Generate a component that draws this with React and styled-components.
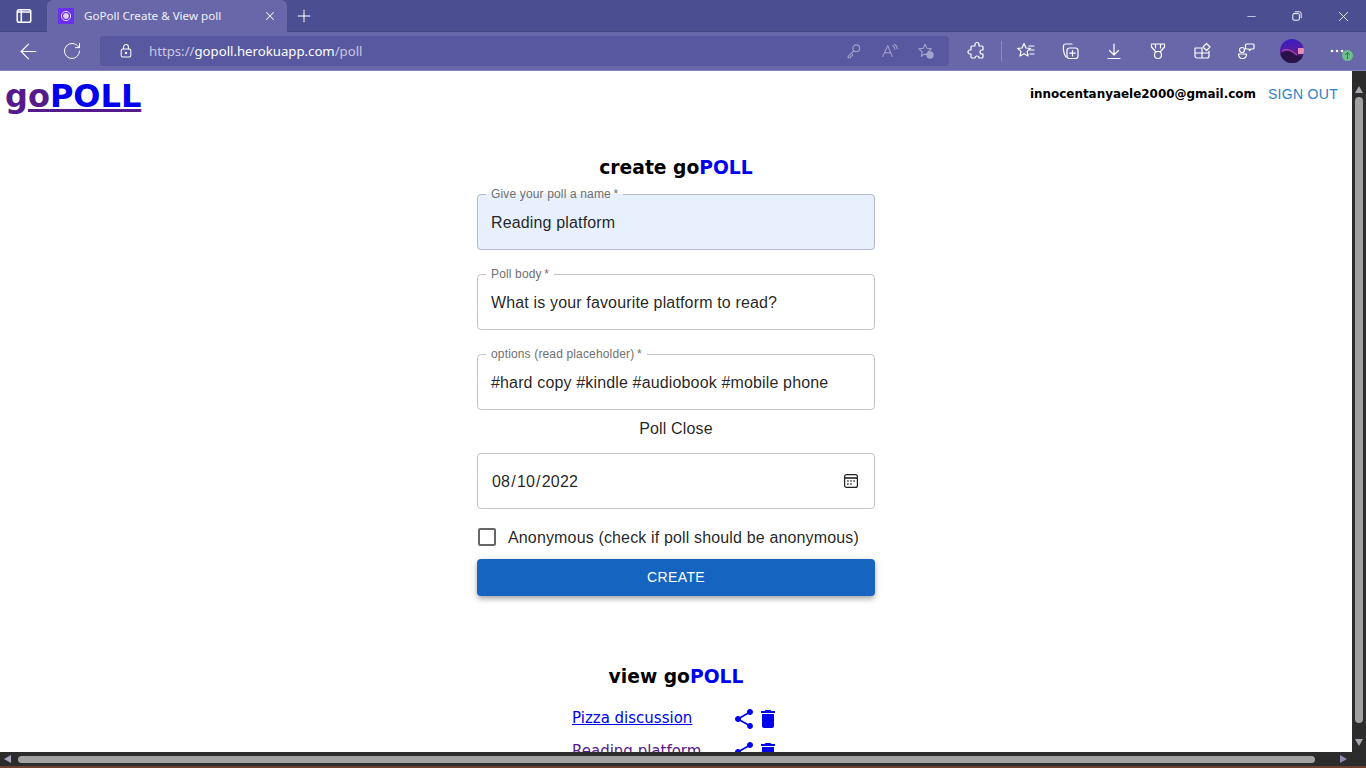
import React from 'react'
import styled, { createGlobalStyle } from 'styled-components'
import { ArrowLeft, RotateCw, Plus, X, Minus } from 'lucide-react'

const GlobalStyle = createGlobalStyle`
  html, body {
    margin: 0;
    height: 100%;
    overflow: hidden;
    background: #fff;
  }
  * { box-sizing: border-box; }
`

const Screen = styled.div`
  width: 1366px;
  height: 768px;
  display: flex;
  flex-direction: column;
  overflow: hidden;
`

const TabBar = styled.div`
  height: 32px;
  flex: none;
  display: flex;
  align-items: flex-end;
  background: #4b4e91;
  box-shadow: inset 0 -1px 0 #434580;
  color: #fff;
`

const SideButton = styled.div`
  width: 47px;
  height: 32px;
  display: flex;
  align-items: center;
  justify-content: center;
`

const Tab = styled.div`
  width: 240px;
  height: 32px;
  padding: 0 10px 0 11px;
  display: flex;
  align-items: center;
  background: #6767a9;
  border-radius: 6px 6px 0 0;
  font: 11.6px "Noto Sans", sans-serif;
  color: #f2f2f8;
`

const Favicon = styled.div`
  width: 16px;
  height: 16px;
  flex: none;
  margin-right: 10px;
  display: flex;
  align-items: center;
  justify-content: center;
  background: #6a2ff0;
`

const TabTitle = styled.span`
  flex: 1;
  padding-bottom: 2px;
  white-space: nowrap;
`

const NewTab = styled.div`
  width: 34px;
  height: 32px;
  display: flex;
  align-items: center;
  justify-content: center;
`

const WindowControls = styled.div`
  margin-left: auto;
  display: flex;
`

const WindowButton = styled.div`
  width: 46px;
  height: 32px;
  display: flex;
  align-items: center;
  justify-content: center;
`

const Toolbar = styled.div`
  height: 39px;
  flex: none;
  display: flex;
  align-items: center;
  padding: 0 6px;
  background: #6767a9;
  border-bottom: 1px solid #8585b8;
  color: #fff;
`

const ToolButton = styled.div`
  width: ${p => p.$w || 44}px;
  height: 30px;
  flex: none;
  display: flex;
  align-items: center;
  justify-content: center;
  opacity: ${p => p.$dim ? 0.45 : 1};
`

const AddressBar = styled.div`
  flex: 1;
  height: 30px;
  margin: 0 6px;
  display: flex;
  align-items: center;
  padding: 0 5px 0 18px;
  border-radius: 4px;
  background: #5858a1;
`

const Url = styled.div`
  flex: 1;
  margin-left: 15px;
  font: 13.2px "Noto Sans", sans-serif;
  color: #c9c9e2;
  white-space: nowrap;
  b {
    font-weight: 400;
    color: #fff;
  }
`

const Separator = styled.div`
  width: 1px;
  height: 20px;
  margin: 0 2px;
  flex: none;
  background: #8a8abd;
`

const MoreBadge = styled.div`
  position: absolute;
  right: 7px;
  bottom: 5px;
  width: 11px;
  height: 11px;
  display: flex;
  align-items: center;
  justify-content: center;
  border-radius: 50%;
  background: #6fbf8d;
`

const MoreButton = styled(ToolButton)`
  position: relative;
`

const Viewport = styled.div`
  flex: 1;
  min-height: 0;
  display: flex;
`

const Page = styled.div`
  flex: 1;
  min-width: 0;
  overflow: hidden;
  background: #fff;
  font-family: "DejaVu Sans", Verdana, sans-serif;
`

const Header = styled.header`
  height: 57px;
  display: flex;
  justify-content: space-between;
  align-items: flex-start;
  padding: 7px 6px 0 5px;
`

const Logo = styled.a`
  font-size: 32px;
  line-height: 37px;
  font-weight: 700;
  color: #551a8b;
  text-decoration: underline;
  cursor: pointer;
`

const Blue = styled.span`
  color: #0000ee;
`

const UserBox = styled.div`
  display: flex;
  align-items: center;
  height: 32px;
`

const Email = styled.span`
  font-size: 11.95px;
  font-weight: 700;
  color: #000;
`

const SignOut = styled.button`
  margin-left: 4px;
  padding: 6px 8px;
  border: 0;
  background: none;
  font: 14px/22px "Liberation Sans", Arial, sans-serif;
  letter-spacing: 0.3px;
  color: #2f7fc4;
  text-transform: uppercase;
`

const Main = styled.main`
  padding-top: 28px;
  display: flex;
  flex-direction: column;
  align-items: center;
`

const Heading = styled.h2`
  margin: 0;
  font-size: 18.72px;
  line-height: 24px;
  font-weight: 700;
  color: #000;
`

const Form = styled.form`
  width: 398px;
  margin-top: 8px;
  display: flex;
  flex-direction: column;
  font-family: "Liberation Sans", Arial, sans-serif;
  letter-spacing: 0.15px;
`

const Field = styled.fieldset`
  margin: 0 0 18px;
  padding: 0 0 0 8px;
  min-width: 0;
  border: 1px solid ${p => p.$filled ? '#b4bacb' : '#c4c4c4'};
  border-radius: 4px;
  background: ${p => p.$filled ? '#e8f0fe' : '#fff'};
`

const FieldLegend = styled.legend`
  padding: 0 5px;
  font-size: 12px;
  line-height: 12px;
  color: #6f6f6f;
  letter-spacing: 0.15px;
  white-space: nowrap;
`

const FieldValue = styled.div`
  margin: 0 0 3px 5px;
  font-size: 16px;
  line-height: 46px;
  color: rgba(0, 0, 0, 0.87);
  white-space: nowrap;
`

const SectionLabel = styled.div`
  margin-top: -18px;
  height: 43px;
  padding-top: 8px;
  font-size: 16px;
  line-height: 22px;
  text-align: center;
  color: rgba(0, 0, 0, 0.87);
`

const DateBox = styled.div`
  height: 56px;
  display: flex;
  align-items: center;
  justify-content: space-between;
  padding: 0 15px 0 14px;
  border: 1px solid #c4c4c4;
  border-radius: 4px;
  font-size: 16px;
  color: rgba(0, 0, 0, 0.87);
`

const DateText = styled.span`
  padding-top: 2px;
`

const DateSlash = styled.span`
  margin: 0 1.1px;
`

const CheckRow = styled.label`
  height: 38px;
  margin-top: 9px;
  padding-left: 1px;
  display: flex;
  align-items: center;
  font-size: 16px;
  color: rgba(0, 0, 0, 0.87);
`

const CheckBox = styled.span`
  width: 18px;
  height: 18px;
  margin-right: 12px;
  flex: none;
  border: 2px solid #666;
  border-radius: 2px;
`

const CheckText = styled.span`
  padding-top: 2px;
`

const CreateButton = styled.button`
  height: 37px;
  margin-top: 3px;
  padding: 0 0 2px;
  border: 0;
  border-radius: 4px;
  background: #1565c0;
  color: #fff;
  font: 14px "Liberation Sans", Arial, sans-serif;
  letter-spacing: 0.4px;
  text-transform: uppercase;
  box-shadow: 0 2px 4px -1px rgba(0,0,0,.2), 0 4px 5px 0 rgba(0,0,0,.14), 0 1px 10px 0 rgba(0,0,0,.12);
`

const ViewSection = styled.section`
  margin-top: 69px;
  display: flex;
  flex-direction: column;
  align-items: center;
`

const PollList = styled.div`
  width: 208px;
  margin-top: 13px;
  display: flex;
  flex-direction: column;
`

const PollRow = styled.div`
  height: 33px;
  display: flex;
  align-items: center;
`

const PollLink = styled.a`
  flex: 1;
  font-size: 15px;
  line-height: 20px;
  margin-top: -2px;
  color: ${p => p.$visited ? '#551a8b' : '#0000ee'};
  text-decoration: underline;
  white-space: nowrap;
`

const VScroll = styled.div`
  width: 14px;
  flex: none;
  display: flex;
  flex-direction: column;
  align-items: center;
  padding: 15px 0 6px;
  background: #2c2c2c;
`

const VThumb = styled.div`
  width: 8px;
  flex: 1;
  margin: 4px 0 16px;
  border-radius: 4px;
  background: #a0a0a0;
`

const HScroll = styled.div`
  height: 14px;
  flex: none;
  display: flex;
  align-items: center;
  padding: 0 19px 0 4px;
  background: #2c2c2c;
`

const HThumb = styled.div`
  height: 7px;
  flex: 1;
  margin: 0 25px 0 7px;
  border-radius: 4px;
  background: #a2a2a2;
`

const Arrow = styled.span`
  width: 0;
  height: 0;
  flex: none;
  border-style: solid;
  border-color: transparent;
  border-width: ${p => p.$dir === 'up' || p.$dir === 'down' ? '0 4px' : '4px 0'};
  ${p => p.$dir === 'up' && 'border-bottom: 7px solid #a6a6b0;'}
  ${p => p.$dir === 'down' && 'border-top: 7px solid #a6a6b0;'}
  ${p => p.$dir === 'left' && 'border-right: 7px solid #a6a6c0;'}
  ${p => p.$dir === 'right' && 'border-left: 7px solid #8b8bb5;'}
`

const BottomStrip = styled.div`
  height: 2px;
  flex: none;
  background: #70402f;
`

const Stroke = ({ size = 20, w = 1.2, children }) => (
  <svg width={size} height={size} viewBox="0 0 20 20" fill="none" stroke="currentColor" strokeWidth={w} strokeLinecap="round" strokeLinejoin="round">
    {children}
  </svg>
)

const polls = [
  { name: 'Pizza discussion' },
  { name: 'Reading platform', visited: true },
]

function ShareIcon() {
  return (
    <svg width="24" height="24" viewBox="0 0 24 24" fill="#0000ee">
      <path d="M18 16.08c-.76 0-1.44.3-1.96.77L8.91 12.7c.05-.23.09-.46.09-.7s-.04-.47-.09-.7l7.05-4.11c.54.5 1.25.81 2.04.81 1.66 0 3-1.34 3-3s-1.34-3-3-3-3 1.34-3 3c0 .24.04.47.09.7L8.04 9.81C7.5 9.31 6.79 9 6 9c-1.66 0-3 1.34-3 3s1.34 3 3 3c.79 0 1.5-.31 2.04-.81l7.12 4.16c-.05.21-.08.43-.08.65 0 1.61 1.31 2.92 2.92 2.92 1.61 0 2.92-1.31 2.92-2.92s-1.31-2.92-2.92-2.92z" />
    </svg>
  )
}

function TrashIcon() {
  return (
    <svg width="24" height="24" viewBox="0 0 24 24" fill="#0000ee">
      <path d="M6 19c0 1.1.9 2 2 2h8c1.1 0 2-.9 2-2V7H6v12zM19 4h-3.5l-1-1h-5l-1 1H5v2h14V4z" />
    </svg>
  )
}

function CalendarIcon() {
  return (
    <svg width="16" height="16" viewBox="0 0 16 16" fill="none" stroke="#222" strokeWidth="1.2">
      <rect x="1.600" y="1.600" width="12.800" height="12.800" rx="2" />
      <path d="M1.600 5h12.800" strokeWidth="1.600" />
      <path d="M4.200 8h1.400M7.300 8h1.400M10.400 8h1.400M4.200 11h1.400M7.300 11h1.400" strokeWidth="1.400" />
    </svg>
  )
}

function Avatar() {
  return (
    <svg width="24" height="24" viewBox="0 0 24 24">
      <defs>
        <linearGradient id="sky" x1="0.3" y1="0" x2="0.5" y2="1">
          <stop offset="0" stopColor="#3a1bc8" />
          <stop offset="0.55" stopColor="#5a1f9a" />
          <stop offset="1" stopColor="#1c0f3c" />
        </linearGradient>
        <clipPath id="disc"><circle cx="12" cy="12" r="12" /></clipPath>
      </defs>
      <circle cx="12" cy="12" r="12" fill="url(#sky)" />
      <g clipPath="url(#disc)">
        <path d="M0 15C6 10 11 12 15 16L24 19V24H0Z" fill="#2a1248" />
        <path d="M2 12C7 9 11 11 17 16" stroke="#b04ba0" strokeWidth="1.200" fill="none" />
        <rect x="18" y="9" width="6" height="6" fill="#e78bb9" />
      </g>
    </svg>
  )
}

function Chrome() {
  return (
    <>
      <TabBar>
        <SideButton>
          <Stroke size={18} w={1.700}>
            <rect x="2.500" y="3" width="15" height="14" rx="2" />
            <path d="M7 4v12M3 5.500h14" />
          </Stroke>
        </SideButton>
        <Tab>
          <Favicon>
            <svg width="12" height="12" viewBox="0 0 12 12" fill="none" stroke="#e5dcff" strokeWidth="1">
              <circle cx="6" cy="6" r="4.600" />
              <circle cx="6" cy="6" r="2.400" fill="#d8ccff" />
            </svg>
          </Favicon>
          <TabTitle>GoPoll Create &amp; View poll</TabTitle>
          <X size={14} strokeWidth={1.800} />
        </Tab>
        <NewTab><Plus size={20} strokeWidth={1.200} /></NewTab>
        <WindowControls>
          <WindowButton><Minus size={13} strokeWidth={1.200} /></WindowButton>
          <WindowButton>
            <Stroke size={12} w={1.600}>
              <rect x="3" y="6" width="11" height="11" rx="2" />
              <path d="M7 3h7a3 3 0 0 1 3 3v7" />
            </Stroke>
          </WindowButton>
          <WindowButton><X size={17} strokeWidth={1.200} /></WindowButton>
        </WindowControls>
      </TabBar>
      <Toolbar>
        <ToolButton><ArrowLeft size={25} strokeWidth={1.100} /></ToolButton>
        <ToolButton><RotateCw size={20} strokeWidth={1.200} /></ToolButton>
        <AddressBar>
          <Stroke size={16} w={1.300}>
            <rect x="4" y="7.500" width="12" height="10" rx="2" />
            <path d="M7 7.500V5a3 3 0 0 1 6 0v2.500" />
            <circle cx="10" cy="12.500" r=".8" fill="currentColor" />
          </Stroke>
          <Url>https://<b>gopoll.herokuapp.com</b>/poll</Url>
          <ToolButton $w={36} $dim>
            <Stroke size={18}>
              <circle cx="12.500" cy="7" r="3.800" />
              <path d="M9.800 9.800 3.500 16v1.500H6l.5-2H8l.5-1.700" />
            </Stroke>
          </ToolButton>
          <ToolButton $w={36} $dim>
            <Stroke size={18}>
              <path d="M2 16 7.500 4 12.500 16M4 12h7" />
              <path d="M13 4c1.500 1 2.500 2.500 2.500 4M15 2.500c2 1.300 3 3 3 5" />
            </Stroke>
          </ToolButton>
          <ToolButton $w={36} $dim>
            <Stroke size={18}>
              <path d="M9 2.500 11 7l5 .5-3.500 3.300L11 14l-3-.5L4.800 16 5.800 11 2 7.600 7 7Z" />
              <circle cx="14.500" cy="14.500" r="3.500" fill="currentColor" />
            </Stroke>
          </ToolButton>
        </AddressBar>
        <ToolButton>
          <Stroke size={20}>
            <path d="M8 3.500a2 2 0 0 1 4 0V5h3a1 1 0 0 1 1 1v3h-1a2 2 0 0 0 0 4h1v3a1 1 0 0 1-1 1h-3a2 2 0 0 0-4 0H5a1 1 0 0 1-1-1v-3H3a2 2 0 0 1 0-4h1V6a1 1 0 0 1 1-1h3Z" />
          </Stroke>
        </ToolButton>
        <Separator />
        <ToolButton>
          <Stroke size={20}>
            <path d="M8 2.500 10 7l4.500.4-3.400 3 1 4.600L8 12.700 4 15l1-4.600L1.600 7.400 6 7ZM13 5h5M14 9h4M14 13h4" />
          </Stroke>
        </ToolButton>
        <ToolButton>
          <Stroke size={20}>
            <path d="M6 16C4 14 3 8 3.500 5a2 2 0 0 1 2-2H12" />
            <rect x="7" y="7" width="11" height="10.500" rx="2.500" />
            <path d="M12.500 9.500v5.500M9.800 12.200h5.400" />
          </Stroke>
        </ToolButton>
        <ToolButton>
          <Stroke size={20}>
            <path d="M10 3v11M5.500 9.500 10 14l4.500-4.500M4 17.500h12" />
          </Stroke>
        </ToolButton>
        <ToolButton>
          <Stroke size={20}>
            <path d="M3.500 3h13v3L12.500 10.500h-5L3.500 6ZM7.500 3v4M12.500 3v4" />
            <circle cx="10" cy="14" r="3.500" />
          </Stroke>
        </ToolButton>
        <ToolButton>
          <Stroke size={20}>
            <path d="M3 7h7v10H5a2 2 0 0 1-2-2ZM3 12h14M10 7v10M10 17h5a2 2 0 0 0 2-2V10" />
            <path d="m14.500 2.500 3.500 3.500-3.500 3.500L11 6Z" />
          </Stroke>
        </ToolButton>
        <ToolButton>
          <Stroke size={20}>
            <circle cx="6" cy="9" r="2.500" />
            <path d="M2.500 13h8c0 3-1.500 4.500-4 4.500S2.500 16 2.500 13Z" />
            <path d="M10.500 3h6.500a1 1 0 0 1 1 1v3a1 1 0 0 1-1 1h-2l-1.500 1.500L13 8h-2.500a1 1 0 0 1-1-1V4a1 1 0 0 1 1-1Z" />
          </Stroke>
        </ToolButton>
        <ToolButton $w={48}><Avatar /></ToolButton>
        <MoreButton>
          <svg width="16" height="4" viewBox="0 0 16 4" fill="#fff">
            <circle cx="2" cy="2" r="1.300" />
            <circle cx="7" cy="2" r="1.300" />
            <circle cx="12" cy="2" r="1.300" />
          </svg>
          <MoreBadge>
            <svg width="9" height="9" viewBox="0 0 9 9" fill="none" stroke="#2f7a52" strokeWidth="1">
              <path d="M4.500 8V1.500M2 4l2.500-2.500L7 4" />
            </svg>
          </MoreBadge>
        </MoreButton>
      </Toolbar>
    </>
  )
}

function App() {
  return (
    <Screen>
      <GlobalStyle />
      <Chrome />
      <Viewport>
        <Page>
          <Header>
            <Logo>go<Blue>POLL</Blue></Logo>
            <UserBox>
              <Email>innocentanyaele2000@gmail.com</Email>
              <SignOut>Sign out</SignOut>
            </UserBox>
          </Header>
          <Main>
            <Heading>create go<Blue>POLL</Blue></Heading>
            <Form>
              <Field $filled>
                <FieldLegend>Give your poll a name{'\u2009'}*</FieldLegend>
                <FieldValue>Reading platform</FieldValue>
              </Field>
              <Field>
                <FieldLegend>Poll body{'\u2009'}*</FieldLegend>
                <FieldValue>What is your favourite platform to read?</FieldValue>
              </Field>
              <Field>
                <FieldLegend>options (read placeholder){'\u2009'}*</FieldLegend>
                <FieldValue>#hard copy #kindle #audiobook #mobile phone</FieldValue>
              </Field>
              <SectionLabel>Poll Close</SectionLabel>
              <DateBox>
                <DateText>08<DateSlash>/</DateSlash>10<DateSlash>/</DateSlash>2022</DateText>
                <CalendarIcon />
              </DateBox>
              <CheckRow>
                <CheckBox />
                <CheckText>Anonymous (check if poll should be anonymous)</CheckText>
              </CheckRow>
              <CreateButton type="button">Create</CreateButton>
            </Form>
            <ViewSection>
              <Heading>view go<Blue>POLL</Blue></Heading>
              <PollList>
                {polls.map(poll => (
                  <PollRow key={poll.name}>
                    <PollLink $visited={poll.visited}>{poll.name}</PollLink>
                    <ShareIcon />
                    <TrashIcon />
                  </PollRow>
                ))}
              </PollList>
            </ViewSection>
          </Main>
        </Page>
        <VScroll>
          <Arrow $dir="up" />
          <VThumb />
          <Arrow $dir="down" />
        </VScroll>
      </Viewport>
      <HScroll>
        <Arrow $dir="left" />
        <HThumb />
        <Arrow $dir="right" />
      </HScroll>
      <BottomStrip />
    </Screen>
  )
}

export default App
